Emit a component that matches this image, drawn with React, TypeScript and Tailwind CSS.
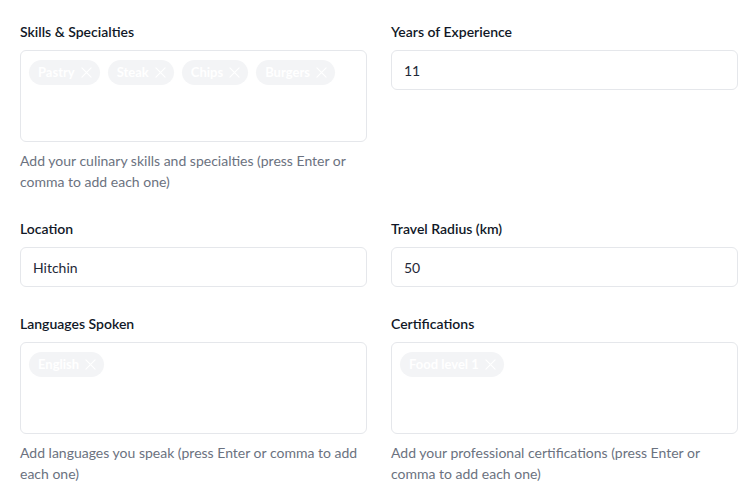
import React from "react";

const XIcon = () => (
  <svg width="11" height="11" viewBox="0 0 12 12" fill="none" stroke="currentColor" strokeWidth="1.2" strokeLinecap="round" className="shrink-0">
    <path d="M1 1l10 10M11 1 1 11" />
  </svg>
);

type TagFieldProps = {
  label: string;
  tags: string[];
  help: string;
};

const TagField = ({ label, tags, help }: TagFieldProps) => (
  <div className="flex flex-col">
    <label className="text-[14px] leading-[21px] font-semibold text-[#111827] mb-2">{label}</label>
    <div className="h-[92px] border border-[#e5e7eb] rounded-md px-2 py-[9px] flex flex-wrap content-start gap-2">
      {tags.map((tag, index) => (
        <span
          key={index}
          className="h-[25px] flex items-center gap-[6px] bg-[#f3f4f6] text-white rounded-full pl-[9px] pr-[8px] text-[13px] font-bold"
        >
          {tag}
          <XIcon />
        </span>
      ))}
    </div>
    <p className="mt-2 text-[14px] leading-[21px] text-[#6b7280]">{help}</p>
  </div>
);

type InputFieldProps = {
  label: string;
  value: string;
};

const InputField = ({ label, value }: InputFieldProps) => (
  <div className="flex flex-col">
    <label className="text-[14px] leading-[21px] font-semibold text-[#111827] mb-2">{label}</label>
    <input
      readOnly
      value={value}
      className="h-10 border border-[#e5e7eb] rounded-md px-3 text-[14px] text-[#1f2937] outline-none"
    />
  </div>
);

export default function App() {
  return (
    <div
      className="w-[754px] h-[487px] bg-white overflow-hidden pl-5 pt-[21px]"
      style={{ fontFamily: 'Lato, "Open Sans", sans-serif' }}
    >
      <div className="grid grid-cols-[347px_347px] gap-x-6 gap-y-[26px] items-start">
        <TagField
          label="Skills & Specialties"
          tags={["Pastry", "Steak", "Chips", "Burgers"]}
          help="Add your culinary skills and specialties (press Enter or comma to add each one)"
        />
        <InputField label="Years of Experience" value="11" />
        <InputField label="Location" value="Hitchin" />
        <InputField label="Travel Radius (km)" value="50" />
        <TagField
          label="Languages Spoken"
          tags={["English"]}
          help="Add languages you speak (press Enter or comma to add each one)"
        />
        <TagField
          label="Certifications"
          tags={["Food level 1"]}
          help="Add your professional certifications (press Enter or comma to add each one)"
        />
      </div>
    </div>
  );
}
